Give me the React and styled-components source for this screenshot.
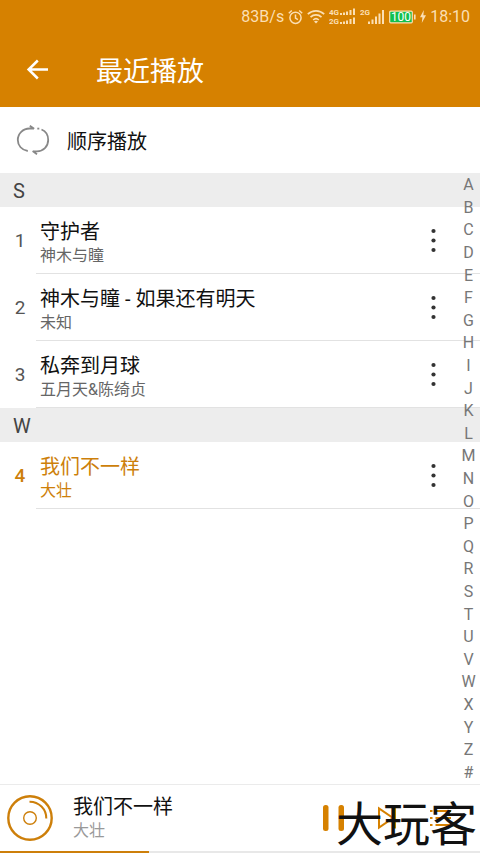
import React from "react";
import styled, {createGlobalStyle} from "styled-components";

const ORANGE = "#d68100";
const ACCENT = "#cd7f0a";

const GlobalStyle = createGlobalStyle`
    * {
        box-sizing: border-box;
    }
    body {
        margin: 0;
        background: #fff;
        color: #111;
        font-family: Roboto, "Noto Sans CJK SC", sans-serif;
    }
    button {
        display: flex;
        align-items: center;
        justify-content: center;
        margin: 0;
        padding: 0;
        border: 0;
        background: none;
        color: inherit;
        font: inherit;
    }
    h1, h2, ol {
        margin: 0;
        padding: 0;
        font-weight: 400;
        list-style: none;
    }
    svg {
        display: block;
        flex: none;
    }
`;

const Page = styled.div`
    display: flex;
    flex-direction: column;
    min-height: 100vh;
`;

const Header = styled.header`
    background: ${ORANGE};
    color: #fff;
`;

const StatusBar = styled.div`
    display: flex;
    align-items: center;
    justify-content: flex-end;
    height: 33px;
    padding: 0 10px;
    gap: 4px;
    color: #fbdfb4;
    font-size: 16px;
`;

const Toolbar = styled.div`
    display: flex;
    align-items: center;
    height: 74px;
    padding: 0 24px;
    gap: 44px;
`;

const Title = styled.h1`
    padding-top: 4px;
    font-size: 27px;
    line-height: 40px;
`;

const PlayMode = styled.button`
    && {
        justify-content: flex-start;
        width: 100%;
        height: 66px;
        padding: 0 16px;
        gap: 17px;
        font-size: 20px;
    }
`;

const Library = styled.main`
    position: relative;
    flex: 1;
`;

const SectionTitle = styled.h2`
    height: 34px;
    padding: 0 13px;
    background: #ededed;
    color: #444;
    font-size: 20px;
    line-height: 36px;
`;

const Track = styled.li`
    display: flex;
    height: 67px;
    color: ${props => props.$active ? ACCENT : "#111"};
`;

const TrackNumber = styled.span`
    width: 36px;
    padding-left: 4px;
    color: ${props => props.$active ? ACCENT : "#555"};
    font-size: 19px;
    font-weight: ${props => props.$active ? 500 : 400};
    line-height: 68px;
    text-align: center;
`;

const TrackBody = styled.div`
    display: flex;
    flex: 1;
    align-items: center;
    justify-content: space-between;
    min-width: 0;
    padding: 0 31px 0 4px;
    border-bottom: 1px solid #e2e2e2;
`;

const TrackText = styled.div`
    padding-top: 5px;
`;

const Song = styled.div`
    font-size: 20px;
    line-height: 26px;
`;

const Artist = styled.div`
    color: ${props => props.$color};
    font-size: 16px;
    line-height: 22px;
`;

const MoreButton = styled.button`
    && {
        width: 32px;
        height: 48px;
        color: #333;
    }
`;

const LetterIndex = styled.nav`
    position: absolute;
    top: 1px;
    right: 0;
    bottom: 0;
    display: flex;
    flex-direction: column;
    width: 23px;
`;

const Letter = styled.a`
    display: flex;
    flex: 1;
    align-items: center;
    justify-content: center;
    color: #777;
    font-size: 16px;
    line-height: 20px;
    text-decoration: none;
`;

const Player = styled.footer`
    position: relative;
    border-top: 1px solid #ebebeb;
    background: #fff;
`;

const PlayerRow = styled.div`
    display: flex;
    align-items: center;
    height: 66px;
    padding: 0 28px 0 7px;
    gap: 20px;
`;

const NowPlaying = styled.div`
    flex: 1;
`;

const Controls = styled.div`
    display: flex;
    gap: 34px;
    color: ${ORANGE};
`;

const Progress = styled.div`
    height: 2px;
    background: #e8e8e8;
`;

const Played = styled.div`
    height: 2px;
    background: ${ACCENT};
`;

const Watermark = styled.span`
    position: absolute;
    right: 3px;
    bottom: 2px;
    color: #111;
    font-size: 47px;
    line-height: 52px;
    pointer-events: none;
`;

const sections = [
    {
        letter: "S",
        tracks: [
            {id: 1, song: "守护者", artist: "神木与瞳"},
            {id: 2, song: "神木与瞳 - 如果还有明天", artist: "未知"},
            {id: 3, song: "私奔到月球", artist: "五月天&陈绮贞"},
        ],
    },
    {
        letter: "W",
        tracks: [
            {id: 4, song: "我们不一样", artist: "大壮"},
        ],
    },
];

const letters = "ABCDEFGHIJKLMNOPQRSTUVWXYZ#".split("");
const current = {id: 4, song: "我们不一样", artist: "大壮", played: 31};

const AlarmIcon = () => (
    <svg width="15" height="16" viewBox="0 0 15 16" fill="none" stroke="currentColor" strokeWidth="1.5">
        <circle cx="7.5" cy="8.8" r="5.6"/>
        <path d="M7.5 5.5v3.6l2.4 1.6M.8 4.2l3-2.7M14.2 4.2l-3-2.7"/>
    </svg>
);

const WifiIcon = () => (
    <svg width="18" height="15" viewBox="0 0 18 15" fill="none" stroke="currentColor" strokeWidth="1.7">
        <path d="M.8 5.2c4.7-4.4 11.7-4.4 16.4 0M3.5 8.2c3.2-3 7.8-3 11 0M6.2 11c1.6-1.5 4-1.5 5.6 0"/>
        <path d="M7 12.4l2 2.2 2-2.2c-1.1-1-2.9-1-4 0z" fill="currentColor" stroke="none"/>
    </svg>
);

const DualSignalIcon = () => (
    <svg width="27" height="17" viewBox="0 0 27 17" fill="currentColor">
        <text x="0" y="7" fontSize="8" fontWeight="700">4G</text>
        <text x="0" y="16" fontSize="8" fontWeight="700">2G</text>
        <path d="M11 5h2v2h-2zM14 4.5h2V7h-2zM17 3.5h2V7h-2zM20.5 2h2v5h-2zM24 .5h2V7h-2z"/>
        <path d="M11 14h2v2h-2zM14 13.5h2V16h-2zM17 12.5h2V16h-2zM20.5 11h2v5h-2zM24 9.5h2V16h-2z"/>
    </svg>
);

const SignalIcon = () => (
    <svg width="25" height="17" viewBox="0 0 25 17" fill="currentColor">
        <text x="0" y="7" fontSize="8" fontWeight="700">2G</text>
        <path d="M8 13.5h2V16H8zM11.5 11.5h2V16h-2zM15 8.5h2V16h-2zM18.5 5.5h2V16h-2zM22 2h2v14h-2z"/>
    </svg>
);

const BatteryIcon = () => (
    <svg width="27" height="14" viewBox="0 0 27 14">
        <rect x=".7" y="1.2" width="22.6" height="11.6" rx="1" fill="#11c04c" stroke="currentColor" strokeWidth="1.2"/>
        <path d="M25 4.5h1.6v5H25z" fill="currentColor"/>
        <text x="12" y="11" fill="#fff" fontSize="12" textAnchor="middle">100</text>
    </svg>
);

const BoltIcon = () => (
    <svg width="6" height="13" viewBox="0 0 6 13" fill="currentColor">
        <path d="M3.8 0L0 7.2h2.4L1.8 13 6 5.2H3.4z"/>
    </svg>
);

const BackIcon = () => (
    <svg width="28" height="26" viewBox="0 0 28 26" fill="none" stroke="currentColor" strokeWidth="2.5">
        <path d="M13.8 3.5L4.6 12.5l9.2 9M5 12.5h19"/>
    </svg>
);

const LoopIcon = () => (
    <svg width="34" height="30" viewBox="0 0 34 30" fill="none" stroke="#888" strokeWidth="1.8">
        <path d="M11.8 26C5.8 25.2 1.8 20.5 1.8 15 1.8 8.5 7 3.5 13.5 3.5h4.5M13.8.8l4.4 3"/>
        <path d="M25.5 4.5c4 1.6 6.7 5.7 6.7 10.5 0 6.5-5 11.3-11.2 11.3h-4.2M21 29.3l-4.4-3.2"/>
        <path d="M21.3 3.6h2"/>
    </svg>
);

const MoreIcon = () => (
    <svg width="5" height="25" viewBox="0 0 5 25" fill="currentColor">
        <circle cx="2.5" cy="3" r="2.1"/>
        <circle cx="2.5" cy="12.5" r="2.1"/>
        <circle cx="2.5" cy="22" r="2.1"/>
    </svg>
);

const DiscIcon = () => (
    <svg width="46" height="46" viewBox="0 0 46 46" fill="none" stroke={ACCENT}>
        <circle cx="23" cy="23" r="21.7" strokeWidth="2.4"/>
        <circle cx="23" cy="23" r="6.3" strokeWidth="1.4"/>
        <path d="M22.5 6.7A16.5 16.5 0 0 1 39.3 23.5" strokeWidth="2"/>
    </svg>
);

const PauseIcon = () => (
    <svg width="21" height="28" viewBox="0 0 21 28" fill="currentColor">
        <rect x="0" y="1" width="5.5" height="26" rx="2.5"/>
        <rect x="15.5" y="1" width="5.5" height="26" rx="2.5"/>
    </svg>
);

const NextIcon = () => (
    <svg width="18" height="24" viewBox="0 0 18 24" fill="none" stroke="currentColor" strokeWidth="2">
        <path d="M1 2.5v19L15 12z"/>
        <path d="M16.5 1.5v21" strokeWidth="3"/>
    </svg>
);

const QueueIcon = () => (
    <svg width="22" height="20" viewBox="0 0 22 20" fill="none" stroke="currentColor" strokeWidth="2">
        <path d="M0 3h2.5M0 10h2.5M0 17h2.5M5.5 3H21M5.5 10H21M5.5 17H21"/>
    </svg>
);

const TrackRow = ({track}) => {
    const active = track.id === current.id;
    return (
        <Track $active={active}>
            <TrackNumber $active={active}>{track.id}</TrackNumber>
            <TrackBody>
                <TrackText>
                    <Song>{track.song}</Song>
                    <Artist $color={active ? ACCENT : "#666"}>{track.artist}</Artist>
                </TrackText>
                <MoreButton aria-label="更多"><MoreIcon/></MoreButton>
            </TrackBody>
        </Track>
    );
};

export default function App() {
    return (
        <Page>
            <GlobalStyle/>
            <Header>
                <StatusBar>
                    <span>83B/s</span>
                    <AlarmIcon/>
                    <WifiIcon/>
                    <DualSignalIcon/>
                    <SignalIcon/>
                    <BatteryIcon/>
                    <BoltIcon/>
                    <span>18:10</span>
                </StatusBar>
                <Toolbar>
                    <button aria-label="返回"><BackIcon/></button>
                    <Title>最近播放</Title>
                </Toolbar>
            </Header>
            <PlayMode>
                <LoopIcon/>
                <span>顺序播放</span>
            </PlayMode>
            <Library>
                {sections.map(section => (
                    <section key={section.letter} id={section.letter}>
                        <SectionTitle>{section.letter}</SectionTitle>
                        <ol>
                            {section.tracks.map(track => <TrackRow key={track.id} track={track}/>)}
                        </ol>
                    </section>
                ))}
                <LetterIndex>
                    {letters.map(letter => <Letter key={letter} href={`#${letter}`}>{letter}</Letter>)}
                </LetterIndex>
            </Library>
            <Player>
                <PlayerRow>
                    <DiscIcon/>
                    <NowPlaying>
                        <Song>{current.song}</Song>
                        <Artist $color="#999">{current.artist}</Artist>
                    </NowPlaying>
                    <Controls>
                        <button aria-label="暂停"><PauseIcon/></button>
                        <button aria-label="下一首"><NextIcon/></button>
                        <button aria-label="播放列表"><QueueIcon/></button>
                    </Controls>
                </PlayerRow>
                <Progress>
                    <Played style={{width: `${current.played}%`}}/>
                </Progress>
                <Watermark>大玩客</Watermark>
            </Player>
        </Page>
    );
}
